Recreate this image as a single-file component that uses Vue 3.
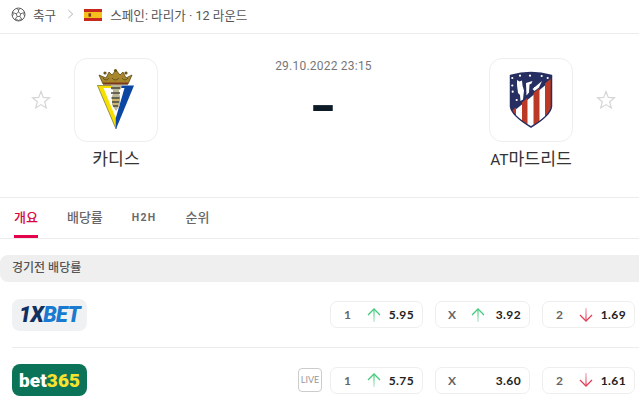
<script setup>
const tabs = [
  { label: '개요', active: true },
  { label: '배당률' },
  { label: 'H2H', latin: true },
  { label: '순위' },
]
const rows = [
  {
    id: '1x',
    odds: [
      { k: '1', dir: 'up', v: '5.95' },
      { k: 'X', dir: 'up', v: '3.92' },
      { k: '2', dir: 'down', v: '1.69' },
    ],
  },
  {
    id: '365',
    live: true,
    odds: [
      { k: '1', dir: 'up', v: '5.75' },
      { k: 'X', dir: '', v: '3.60' },
      { k: '2', dir: 'down', v: '1.61' },
    ],
  },
]
const stars = [
  [41, 17.7], [31, 17.7], [52.7, 18], [58.7, 20], [23.3, 20], [23.3, 27.5], [23.7, 33.7], [27.7, 42], [46, 30],
]
</script>

<template>
  <div class="page">
    <nav class="crumbs">
      <svg class="ball" viewBox="0 0 16 16" width="15" height="15">
        <circle cx="8" cy="8" r="6.9" fill="none" stroke="#555" stroke-width="1" />
        <path d="M8 5.400l2.400 1.800-.9 2.900H6.500l-.9-2.900zM8 5.400V2.900M10.400 7.200l3-1.100M9.500 10.100l1.900 2.600M6.500 10.100l-1.900 2.600M5.600 7.200l-3-1.100M5.800 1.600L8 2.900l2.200-1.300M14.200 5l-.6 2.800 1 1.800M1.800 5l.6 2.800-1 1.800M4 13.300l2.100-.4L8 14.800l1.900-1.900 2.100.4" fill="none" stroke="#555" stroke-width=".9" />
      </svg>
      <span class="crumb-sport">축구</span>
      <svg class="chev" viewBox="0 0 8 12" width="7" height="11">
        <path d="M1.500 1l5 4.500-5 4.500" fill="none" stroke="#aaa" stroke-width="1" />
      </svg>
      <svg class="flag" viewBox="0 0 18 12" width="18" height="12">
        <rect width="18" height="12" fill="#c8281e" />
        <rect y="3" width="18" height="6" fill="#f6bf1c" />
        <rect x="4.500" y="4.300" width="2.600" height="3.400" fill="#7a3b1a" />
      </svg>
      <span class="crumb-league">스페인: 라리가 · 12 라운드</span>
    </nav>

    <section class="match">
      <div class="team">
        <svg class="star" viewBox="0 0 20 20" width="20" height="20">
          <path d="M10 1.500l2.300 5.900 6.200.4-4.800 4 1.600 6.200-5.300-3.400-5.300 3.400 1.600-6.200-4.800-4 6.200-.4z" fill="none" stroke="#d5d5d5" stroke-width="1.200" />
        </svg>
        <div class="team-body">
          <div class="logo">
            <svg viewBox="0 0 84 84" width="84" height="84">
              <path d="M25 17l4 9h25l4-9-6 3-3-6-3 3-4-5-4 5-3-3-3 6z" fill="#a8862c" stroke="#5a4a18" stroke-width=".8" />
              <circle cx="41.500" cy="12.500" r="1.600" fill="#6b5516" />
              <circle cx="31" cy="15" r="1.600" fill="#6b5516" />
              <circle cx="52" cy="15" r="1.600" fill="#6b5516" />
              <path d="M29 20q3 4 6 0M38 20q3.500 4 7 0M48 20q3 4 6 0" fill="none" stroke="#5a4a18" stroke-width=".8" />
              <rect x="29" y="24.500" width="25" height="2" fill="#7d3b1c" />
              <path d="M23.500 27.500h18.500V71z" fill="#f7e000" stroke="#3a3a10" stroke-width=".5" />
              <path d="M60 27.500H42V71z" fill="#0b46a3" />
              <path d="M29.500 30h21L41.800 60z" fill="#fff" />
              <path d="M37 27h11l-1 4-2 1v4l1 2v9l-4 6-4-6v-9l1-2v-4l-2-1z" fill="#bdb79a" />
              <path d="M37 30h9M37 35h9M37.500 40h8M38 44h7M39 48h5" stroke="#4a4a3a" stroke-width="1.300" />
              <path d="M38 42h7M39 46h5" stroke="#d9b23a" stroke-width="1" />
            </svg>
          </div>
          <div class="team-name">카디스</div>
        </div>
      </div>

      <div class="score">
        <div class="date">29.10.2022 23:15</div>
        <div class="dash">-</div>
      </div>

      <div class="team">
        <div class="team-body">
          <div class="logo">
            <svg viewBox="0 0 84 84" width="84" height="84">
              <defs>
                <clipPath id="shield">
                  <path d="M21.500 17.500q20.500-6 41 0v31q-1 9-20.500 20.500Q22.500 57.500 21.500 48.500z" />
                </clipPath>
              </defs>
              <g clip-path="url(#shield)">
                <rect x="20" y="10" width="44" height="60" fill="#272e61" />
                <path d="M20 57L64 21v52H20z" fill="#fff" />
                <path d="M20 40h7v34h-7zM33 40h5.500v34H33zM44.500 30h6v44h-6zM56 20h7v54h-7z" fill="#bb3a26" />
                <path d="M20 55L64 19V0H20z" fill="#272e61" />
              </g>
              <path d="M21.500 17.500q20.500-6 41 0v31q-1 9-20.500 20.500Q22.500 57.500 21.500 48.500z" fill="none" stroke="#272e61" stroke-width="1.500" />
              <path d="M28 22l2.500 1.500 2.500-1 .5 5 1.500 5-1 9-2.500 1.500-.5-6-2-2-1-8zM37 25l6.500-2-1 2.500-2 1-.5 8-2.500 3zM43.500 31l9.500-8-3 6.500-4.500 3.500z" fill="#fff" />
              <circle v-for="(s, i) in stars" :key="i" :cx="s[0]" :cy="s[1]" r="1.100" fill="#fff" />
            </svg>
          </div>
          <div class="team-name"><span class="latin-name">AT</span>마드리드</div>
        </div>
        <svg class="star" viewBox="0 0 20 20" width="20" height="20">
          <path d="M10 1.500l2.300 5.900 6.200.4-4.800 4 1.600 6.200-5.300-3.400-5.300 3.400 1.600-6.200-4.800-4 6.200-.4z" fill="none" stroke="#d5d5d5" stroke-width="1.200" />
        </svg>
      </div>
    </section>

    <div class="tabs">
      <div v-for="t in tabs" :key="t.label" class="tab" :class="{ active: t.active, latin: t.latin }">{{ t.label }}</div>
    </div>

    <div class="section-title">경기전 배당률</div>

    <div v-for="r in rows" :key="r.id" class="row">
      <div v-if="r.id === '1x'" class="brand brand-1x"><span class="x1">1X</span><span class="xbet">BET</span></div>
      <div v-else class="brand brand-365"><span class="b-w">bet</span><span class="b-y">365</span></div>
      <div v-if="r.live" class="live">LIVE</div>
      <div class="odds">
        <div v-for="o in r.odds" :key="o.k" class="odd" :class="'odd-' + o.k">
          <span class="k">{{ o.k }}</span>
          <svg v-if="o.dir === 'up'" class="arrow" viewBox="0 0 14 16" width="14" height="16">
            <defs>
              <linearGradient :id="'u' + r.id + o.k" gradientUnits="userSpaceOnUse" x1="0" y1="2" x2="0" y2="15">
                <stop offset="0" stop-color="#45c97d" />
                <stop offset="1" stop-color="#bfeed2" />
              </linearGradient>
            </defs>
            <path d="M7 15V2" fill="none" :stroke="'url(#u' + r.id + o.k + ')'" stroke-width="1.300" />
            <path d="M1 8l6-6 6 6" fill="none" stroke="#45c97d" stroke-width="1.300" />
          </svg>
          <svg v-else-if="o.dir === 'down'" class="arrow" viewBox="0 0 14 16" width="14" height="16">
            <defs>
              <linearGradient :id="'d' + r.id + o.k" gradientUnits="userSpaceOnUse" x1="0" y1="1" x2="0" y2="14">
                <stop offset="0" stop-color="#f3b6c0" />
                <stop offset="1" stop-color="#e2405a" />
              </linearGradient>
            </defs>
            <path d="M7 1v13" fill="none" :stroke="'url(#d' + r.id + o.k + ')'" stroke-width="1.300" />
            <path d="M1 8l6 6 6-6" fill="none" stroke="#e2405a" stroke-width="1.300" />
          </svg>
          <span v-else class="arrow"></span>
          <span class="v">{{ o.v }}</span>
        </div>
      </div>
    </div>
  </div>
</template>

<style>
html, body { margin: 0; background: #fff; overflow: hidden; }
</style>

<style scoped>
.page {
  width: 639px;
  height: 404px;
  overflow: hidden;
  background: #fff;
  font-family: Roboto, "Noto Sans CJK KR", sans-serif;
  color: #333;
}
.crumbs {
  height: 34px;
  box-sizing: border-box;
  border-bottom: 1px solid #ececec;
  display: flex;
  align-items: center;
  padding: 0 0 4px 11px;
  font-size: 12.6px;
  color: #555;
}
.crumb-sport { margin-left: 7px; }
.chev { margin-left: 11px; }
.flag { margin-left: 10px; }
.crumb-league { margin-left: 8px; }
.match {
  height: 163px;
  box-sizing: border-box;
  padding: 24px 23px 0 31px;
  display: flex;
  justify-content: space-between;
}
.team { display: flex; align-items: flex-start; width: 127px; justify-content: space-between; }
.star { margin-top: 32px; }
.team-body { width: 84px; display: flex; flex-direction: column; align-items: center; }
.team-name { white-space: nowrap; font-size: 17.2px; line-height: 20px; margin-top: 7px; color: #333; }
.latin-name { font-size: 15.5px; }
.logo {
  width: 84px;
  height: 84px;
  box-sizing: border-box;
  border: 1px solid #eeeeee;
  border-radius: 13px;
  overflow: hidden;
}
.logo svg { display: block; margin: -1px; }
.score { display: flex; flex-direction: column; align-items: center; }
.date { font-size: 12px; line-height: 16px; color: #777; letter-spacing: .22px; }
.dash {
  font-size: 46px;
  font-weight: 900;
  line-height: 20px;
  margin-top: 22px;
  color: #0d1b26;
  transform: scaleX(1.45);
}
.tabs {
  height: 42px;
  box-sizing: border-box;
  border-top: 1px solid #ececec;
  border-bottom: 1px solid #ececec;
  display: flex;
  padding-left: 14px;
  gap: 29px;
}
.tab {
  font-size: 13px;
  line-height: 39px;
  height: 40px;
  box-sizing: border-box;
  color: #666;
  font-weight: 500;
}
.tab.latin { font-size: 10.5px; font-weight: 700; letter-spacing: 1.3px; color: #6a6a6a; }
.tab.active { color: #d8063f; border-bottom: 3px solid #e4044c; }
.section-title {
  margin-top: 16px;
  height: 27px;
  line-height: 26px;
  background: #efefef;
  border-radius: 8px 0 0 8px;
  padding-left: 12px;
  font-size: 12px;
  color: #555;
  font-weight: 500;
}
.row {
  height: 65px;
  box-sizing: border-box;
  margin-left: 12px;
  display: flex;
  align-items: center;
  padding-right: 4px;
}
.row + .row { border-top: 1px solid #ececec; }
.brand {
  width: 75px;
  height: 32px;
  border-radius: 8px;
  display: flex;
  align-items: center;
  justify-content: center;
  font-family: Roboto, sans-serif;
  font-weight: 900;
  flex: none;
}
.brand-1x { background: #eff1f3; font-style: italic; font-size: 21.5px; letter-spacing: -.6px; }
.x1 { color: #10305f; }
.xbet { color: #1a7ad0; }
.brand-365 { background: #0b7358; font-size: 19px; letter-spacing: .1px; }
.b-w { color: #fff; }
.b-y { color: #f7e22e; }
.live {
  margin-left: auto;
  width: 24px;
  height: 24px;
  box-sizing: border-box;
  border: 1px solid #ccc;
  border-radius: 4px;
  font-size: 9px;
  line-height: 22px;
  text-align: center;
  color: #999;
  font-family: Lato, sans-serif;
}
.odds { display: flex; gap: 12px; margin-left: 8px; }
.row:not(:has(.live)) .odds { margin-left: auto; }
.odd {
  height: 27px;
  box-sizing: border-box;
  border: 1px solid #eeeeee;
  border-radius: 7px;
  display: flex;
  align-items: center;
  font-family: Lato, sans-serif;
  font-size: 12px;
}
.odd-1 { width: 93px; }
.odd-X { width: 95px; }
.odd-2 { width: 93px; }
.k { margin-left: 13px; width: 16px; color: #666; font-weight: 700; }
.arrow { width: 14px; height: 16px; margin-left: 7px; display: block; }
.odd-X .k { margin-left: 12px; }
.v { margin-left: auto; margin-right: 8px; font-weight: 700; color: #222; letter-spacing: .4px; }
</style>
